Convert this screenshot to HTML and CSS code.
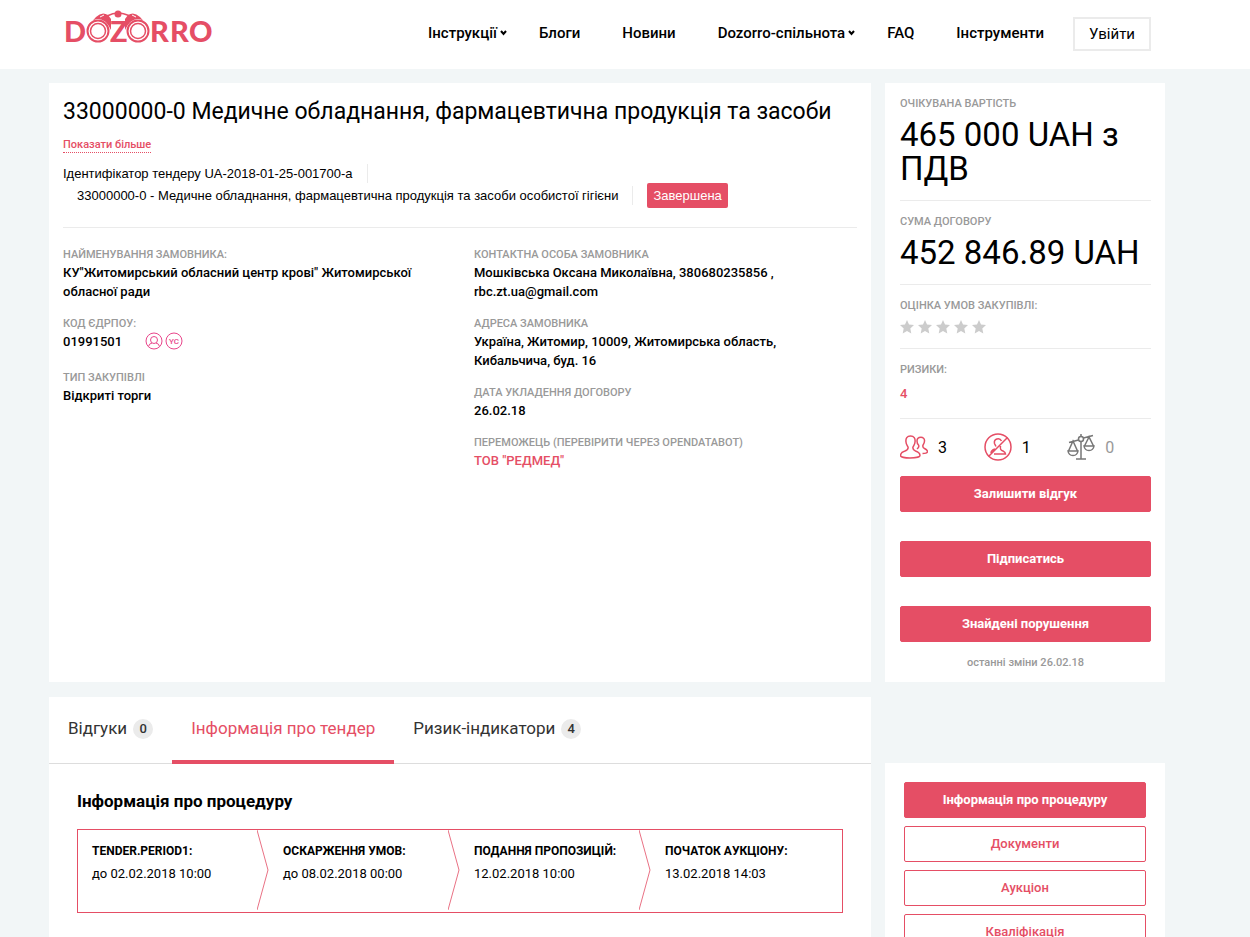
FILE: index.html
```html
<!DOCTYPE html>
<html lang="uk">
<head>
    <meta charset="UTF-8">
    <meta name="viewport" content="width=device-width, initial-scale=1.0">
    <title>Dozorro</title>
    <link rel="stylesheet" href="styles.css">
</head>
<body>
    <header class="header">
        <a href="#" class="logo" aria-label="Dozorro">
            <svg width="156" height="52" viewBox="-4 -8 156 52">
                <g class="logo-text">
                    <text x="-1" y="32">D</text>
                    <text x="45" y="32">Z</text>
                    <text x="85" y="32">R</text>
                    <text x="105" y="32">R</text>
                    <text x="124" y="32">O</text>
                </g>
                <path class="logo-fill" d="M23 16 L31 7 Q37 1 43 5 L46 9 V20 Q41 9 33 9 Q27 9 23 16Z M83 16 L75 7 Q69 1 63 5 L60 9 V20 Q65 9 73 9 Q79 9 83 16Z"/>
                <path class="logo-line" d="M42 6 Q48 3 53 3 Q58 3 65 6"/>
                <circle class="logo-fill" cx="53" cy="4" r="3.500"/>
                <g class="logo-ring">
                    <circle cx="33" cy="21" r="10.500"/>
                    <circle cx="73" cy="21" r="10.500"/>
                </g>
                <g class="logo-lens">
                    <circle cx="33" cy="21" r="7.500"/>
                    <circle cx="73" cy="21" r="7.500"/>
                </g>
                <path class="logo-glare" d="M35 7 L39 5 M71 7 L67 5"/>
            </svg>
        </a>
        <nav class="menu">
            <a href="#">Інструкції<svg class="caret" width="7" height="6" viewBox="0 0 7 6"><path d="M1 1l2.500 3L6 1"/></svg></a>
            <a href="#">Блоги</a>
            <a href="#">Новини</a>
            <a href="#">Dozorro-спільнота<svg class="caret" width="7" height="6" viewBox="0 0 7 6"><path d="M1 1l2.500 3L6 1"/></svg></a>
            <a href="#">FAQ</a>
            <a href="#">Інструменти</a>
        </nav>
        <button type="button" class="login">Увійти</button>
    </header>

    <main class="page">
        <section class="panel tender">
            <h1>33000000-0 Медичне обладнання, фармацевтична продукція та засоби</h1>
            <a href="#" class="show-more">Показати більше</a>
            <div class="tender-meta">
                <div class="meta-row"><span class="meta-item">Ідентифікатор тендеру UA-2018-01-25-001700-a</span></div>
                <div class="meta-row meta-row-code">
                    <span class="meta-item">33000000-0 - Медичне обладнання, фармацевтична продукція та засоби особистої гігієни</span>
                    <span class="status">Завершена</span>
                </div>
            </div>
            <div class="details">
                <dl>
                    <dt>НАЙМЕНУВАННЯ ЗАМОВНИКА:</dt>
                    <dd>КУ"Житомирський обласний центр крові" Житомирської обласної ради</dd>
                    <dt>КОД ЄДРПОУ:</dt>
                    <dd class="code">01991501
                        <span class="code-links">
                            <a href="#" aria-label="Профіль"><svg width="18" height="18" viewBox="0 0 18 18"><circle cx="9" cy="9" r="8"/><circle cx="9" cy="8" r="3.500"/><path d="M3.500 14.500Q4 11.500 7 11M14.500 14.500Q14 11.500 11 11"/></svg></a>
                            <a href="#" aria-label="YC"><svg width="18" height="18" viewBox="0 0 18 18"><circle cx="9" cy="9" r="8"/><text x="9" y="12" text-anchor="middle">YC</text></svg></a>
                        </span>
                    </dd>
                    <dt>ТИП ЗАКУПІВЛІ</dt>
                    <dd>Відкриті торги</dd>
                </dl>
                <dl>
                    <dt>КОНТАКТНА ОСОБА ЗАМОВНИКА</dt>
                    <dd>Мошківська Оксана Миколаївна, 380680235856 , rbc.zt.ua@gmail.com</dd>
                    <dt>АДРЕСА ЗАМОВНИКА</dt>
                    <dd>Україна, Житомир, 10009, Житомирська область, Кибальчича, буд. 16</dd>
                    <dt>ДАТА УКЛАДЕННЯ ДОГОВОРУ</dt>
                    <dd>26.02.18</dd>
                    <dt>ПЕРЕМОЖЕЦЬ (ПЕРЕВІРИТИ ЧЕРЕЗ OPENDATABOT)</dt>
                    <dd><a href="#">ТОВ "РЕДМЕД"</a></dd>
                </dl>
            </div>
        </section>

        <aside class="panel summary">
            <div class="summary-block">
                <h2>ОЧІКУВАНА ВАРТІСТЬ</h2>
                <p class="price">465 000 UAH з ПДВ</p>
            </div>
            <div class="summary-block">
                <h2>СУМА ДОГОВОРУ</h2>
                <p class="price">452 846.89 UAH</p>
            </div>
            <div class="summary-block">
                <h2>ОЦІНКА УМОВ ЗАКУПІВЛІ:</h2>
                <div class="stars">
                    <svg viewBox="0 0 14 14"><path d="M7 0l2 4.500 5 .5-3.700 3.400 1 5L7 10.900 2.700 13.400l1-5L0 5l5-.5z"/></svg>
                    <svg viewBox="0 0 14 14"><path d="M7 0l2 4.500 5 .5-3.700 3.400 1 5L7 10.900 2.700 13.400l1-5L0 5l5-.5z"/></svg>
                    <svg viewBox="0 0 14 14"><path d="M7 0l2 4.500 5 .5-3.700 3.400 1 5L7 10.900 2.700 13.400l1-5L0 5l5-.5z"/></svg>
                    <svg viewBox="0 0 14 14"><path d="M7 0l2 4.500 5 .5-3.700 3.400 1 5L7 10.900 2.700 13.400l1-5L0 5l5-.5z"/></svg>
                    <svg viewBox="0 0 14 14"><path d="M7 0l2 4.500 5 .5-3.700 3.400 1 5L7 10.900 2.700 13.400l1-5L0 5l5-.5z"/></svg>
                </div>
            </div>
            <div class="summary-block">
                <h2>РИЗИКИ:</h2>
                <p class="risks">4</p>
            </div>
            <div class="counters">
                <div class="counter">
                    <svg width="28" height="28" viewBox="0 0 28 28"><path d="M10.500 3C7 3 5.500 5.500 6 9c0 2 1 3 2 5 .5 2-.5 3-3 4-3 1-4.500 2-4.500 4.500C.5 24 5 25 10 25s10-1 10-2.500c0-2.500-1.500-3.500-4.500-4.500-2.500-1-3-2-2.500-4 1-2 2-3 2-5 .5-3.500-1-6-4.500-6zM17 8c0-5 8-5 7.500 0 0 2-1 3-1.500 4-.5 2 0 3 1.500 3.500 2 1 3 2 3 3 0 1.500-2 2-5 2M17 8c0 2 .5 3 1.500 4 1 2 0 3-1.500 4"/></svg>
                    <span>3</span>
                </div>
                <div class="counter">
                    <svg width="28" height="28" viewBox="0 0 28 28"><circle cx="14" cy="14" r="13"/><path d="M23.500 4.500L4.500 23.500M17.500 8c-2-4-8-2-7 2.500l1.500 3M11 16c-3 1-4 2-4 4M16.500 13c-.5 3 0 4 2.500 5 2 1 2.500 2 2.500 3H10"/></svg>
                    <span>1</span>
                </div>
                <div class="counter counter-off">
                    <svg width="28" height="28" viewBox="0 0 28 28"><circle cx="14" cy="6" r="2.500"/><path d="M14 1v2.500M14 8.500V26M9 26h10M2 9.500l9.500-2.500M16.500 5L26 2.500M6 8L1.500 18h9zM22 4l-4.500 9h9zM1 18c1 6 9 6 10 0zM17 13c1 6 9 6 10 0z"/></svg>
                    <span>0</span>
                </div>
            </div>
            <div class="actions">
                <button type="button" class="btn btn-fill">Залишити відгук</button>
                <button type="button" class="btn btn-fill">Підписатись</button>
                <button type="button" class="btn btn-fill">Знайдені порушення</button>
            </div>
            <p class="updated">останні зміни 26.02.18</p>
        </aside>

        <section class="panel info">
            <nav class="tabs">
                <a href="#">Відгуки <span class="badge">0</span></a>
                <a href="#" class="active">Інформація про тендер</a>
                <a href="#">Ризик-індикатори <span class="badge">4</span></a>
            </nav>
            <div class="procedure">
                <h3>Інформація про процедуру</h3>
                <div class="timeline">
                    <div class="step">
                        <strong>TENDER.PERIOD1:</strong>
                        <span>до 02.02.2018 10:00</span>
                        <svg class="arrow" viewBox="0 0 12 82" preserveAspectRatio="none"><path d="M0 0l11 40L0 80"/></svg>
                    </div>
                    <div class="step">
                        <strong>ОСКАРЖЕННЯ УМОВ:</strong>
                        <span>до 08.02.2018 00:00</span>
                        <svg class="arrow" viewBox="0 0 12 82" preserveAspectRatio="none"><path d="M0 0l11 40L0 80"/></svg>
                    </div>
                    <div class="step">
                        <strong>ПОДАННЯ ПРОПОЗИЦІЙ:</strong>
                        <span>12.02.2018 10:00</span>
                        <svg class="arrow" viewBox="0 0 12 82" preserveAspectRatio="none"><path d="M0 0l11 40L0 80"/></svg>
                    </div>
                    <div class="step">
                        <strong>ПОЧАТОК АУКЦІОНУ:</strong>
                        <span>13.02.2018 14:03</span>
                    </div>
                </div>
            </div>
        </section>

        <nav class="panel side-nav">
            <a href="#" class="btn btn-fill">Інформація про процедуру</a>
            <a href="#" class="btn">Документи</a>
            <a href="#" class="btn">Аукціон</a>
            <a href="#" class="btn">Кваліфікація</a>
        </nav>
    </main>
</body>
</html>
```
FILE: styles.css
```css
* {
    box-sizing: border-box;
}

body {
    margin: 0;
    background: #f2f6f7;
    color: #000;
    font-family: Roboto, "Liberation Sans", sans-serif;
    font-size: 13px;
    line-height: 19px;
}

h1, h2, h3, p, dl, dd {
    margin: 0;
}

a {
    color: #e54e65;
    text-decoration: none;
}

/* Header */
.header {
    display: flex;
    align-items: center;
    height: 69px;
    padding: 0 99px 2px 61px;
    background: #fff;
}

.logo {
    margin-right: auto;
    height: 64px;
}

.logo svg {
    display: block;
}

.logo-text {
    font-family: Lato, sans-serif;
    font-size: 29px;
    font-weight: 900;
    fill: #e54e65;
}

.logo-fill {
    fill: #e54e65;
}

.logo-line,
.logo-lens {
    fill: none;
    stroke: #e54e65;
    stroke-width: 1.5;
}

.logo-ring {
    fill: #fff;
    stroke: #e54e65;
    stroke-width: 2;
}

.logo-glare {
    stroke: #fff;
}

.menu {
    display: flex;
    gap: 42px;
    margin-right: 29px;
}

.menu a {
    color: #000;
    font-size: 15px;
    font-weight: 500;
    white-space: nowrap;
}

.caret {
    margin: 0 -10px 2px 3px;
    fill: none;
    stroke: #000;
    stroke-width: 2;
}

.login {
    height: 34px;
    padding: 0 14px;
    background: #fff;
    border: 2px solid #ebebeb;
    color: #000;
    font-family: inherit;
    font-size: 15px;
}

/* Layout */
.page {
    display: grid;
    grid-template-columns: 1fr 280px;
    gap: 15px 14px;
    padding: 14px 85px 0 49px;
}

.panel {
    background: #fff;
}

/* Tender */
.tender {
    padding: 15px 14px 14px;
}

h1 {
    font-size: 23px;
    font-weight: 400;
    line-height: 28px;
}

.show-more {
    display: inline-block;
    margin-top: 12px;
    border-bottom: 1px dotted #e54e65;
    font-size: 11px;
    font-weight: 500;
    line-height: 14px;
}

.tender-meta {
    padding: 10px 0 20px;
    border-bottom: 1px solid #ebebeb;
    font-family: "Liberation Sans", Arial, sans-serif;
}

.meta-row {
    display: flex;
    align-items: center;
    height: 20px;
}

.meta-row-code {
    height: 24px;
    padding-left: 14px;
}

.meta-item {
    padding-right: 14px;
    margin-right: 14px;
    border-right: 1px solid #ebebeb;
}

.status {
    padding: 3px 6px;
    border-radius: 2px;
    background: #e54e65;
    color: #fff;
}

.details {
    display: grid;
    grid-template-columns: 1fr 1fr;
    gap: 28px;
    padding-top: 18px;
}

dt,
h2,
.updated {
    color: #999;
    font-size: 11px;
    font-weight: 500;
    line-height: 17px;
}

dd {
    padding-right: 20px;
    margin-bottom: 14px;
    font-weight: 500;
}

.code {
    display: flex;
    align-items: flex-start;
    gap: 23px;
    height: 23px;
}

.code-links {
    display: flex;
    gap: 2px;
}

.code-links svg {
    display: block;
    fill: none;
    stroke: #e9468b;
}

.code-links text {
    fill: #e9468b;
    stroke: none;
    font-size: 8px;
}

/* Summary */
.summary {
    padding: 12px 14px 11px 15px;
}

.summary-block {
    padding-bottom: 14px;
    margin-bottom: 12px;
    border-bottom: 1px solid #ebebeb;
}

h2 {
    margin-bottom: 6px;
}

.price {
    font-size: 33px;
    line-height: 34px;
}

.stars {
    display: flex;
    gap: 4px;
}

.stars svg {
    width: 14px;
    height: 14px;
    fill: #ccc;
}

.risks {
    padding-bottom: 1px;
    color: #e54e65;
    font-weight: 500;
}

.counters {
    display: grid;
    grid-template-columns: 1fr 1fr 1fr;
    padding: 2px 0 15px;
}

.counter {
    display: flex;
    align-items: center;
    gap: 10px;
    font-size: 16px;
}

.counter svg {
    fill: none;
    stroke: #e54e65;
    stroke-width: 1.5;
}

.counter-off {
    color: #999;
}

.counter-off svg {
    stroke: #777;
}

.btn {
    display: block;
    width: 100%;
    height: 36px;
    padding: 0;
    background: #fff;
    border: 1px solid #e54e65;
    border-radius: 2px;
    color: #e54e65;
    font-family: inherit;
    font-size: 13px;
    font-weight: 500;
    line-height: 34px;
    text-align: center;
}

.btn-fill {
    background: #e54e65;
    color: #fff;
    font-weight: 700;
}

.actions {
    display: grid;
    gap: 29px;
}

.updated {
    margin-top: 12px;
    text-align: center;
}

/* Tabs */
.tabs {
    display: flex;
    height: 67px;
    border-bottom: 1px solid #ddd;
}

.tabs a {
    display: flex;
    align-items: center;
    gap: 6px;
    height: 67px;
    padding: 0 19px;
    border-bottom: 4px solid transparent;
    color: #333;
    font-size: 17px;
}

.tabs .active {
    border-color: #e54e65;
    color: #e54e65;
}

.badge {
    width: 20px;
    border-radius: 10px;
    background: #ebebeb;
    font-size: 13px;
    font-weight: 500;
    line-height: 20px;
    text-align: center;
}

.procedure {
    padding: 27px 28px;
}

h3 {
    margin-bottom: 18px;
    font-size: 17px;
    font-weight: 700;
    line-height: 20px;
}

.timeline {
    display: grid;
    grid-template-columns: repeat(4, 1fr);
    height: 84px;
    border: 1px solid #e54e65;
}

.step {
    position: relative;
    display: flex;
    flex-direction: column;
    gap: 3px;
    padding: 12px 14px;
}

.step strong {
    font-size: 12px;
}

.arrow {
    position: absolute;
    top: 0;
    right: 0;
    width: 12px;
    height: 100%;
    fill: none;
    stroke: #e97184;
}

.side-nav {
    display: flex;
    flex-direction: column;
    gap: 8px;
    margin-top: 66px;
    padding: 19px;
}
```
